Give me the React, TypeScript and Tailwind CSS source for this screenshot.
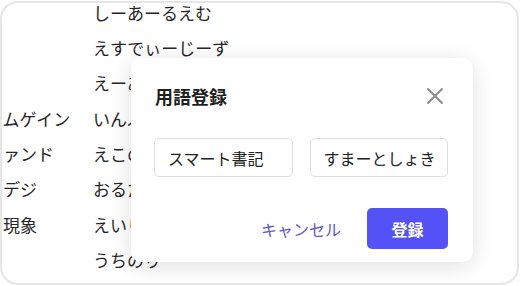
const rows: [string, string][] = [
  ['', 'しーあーるえむ'],
  ['', 'えすでぃーじーず'],
  ['', 'えーあい'],
  ['ラムゲイン', 'いんふれ'],
  ['ファンド', 'えこのみー'],
  ['アデジ', 'おるたなてぃぶ'],
  ['的現象', 'えいりあん'],
  ['', 'うちのり'],
]

function TermDialog() {
  return (
    <div className="absolute left-[129px] top-[55px] w-[342px] h-[204px] bg-white rounded-[10px] shadow-[0_4px_22px_rgba(0,0,0,0.13)] px-6 pt-6 pb-[13px] flex flex-col">
      <div className="flex items-center justify-between">
        <h2 className="text-[18px] leading-7 font-bold text-[#1f1f1f]">用語登録</h2>
        <button aria-label="閉じる" className="mr-[5px] text-[#8c8c8c]">
          <svg width="18" height="18" viewBox="0 0 18 18" fill="none">
            <path d="M2 2L16 16M16 2L2 16" stroke="currentColor" strokeWidth="2" strokeLinecap="round" />
          </svg>
        </button>
      </div>

      <div className="mt-7 flex gap-[17px] pr-[1px] -ml-[1px]">
        <div className="flex-1 h-[39px] border border-[#dedede] rounded-[5px] flex items-center pl-[13px] text-base text-[#222]">
          スマート書記
        </div>
        <div className="flex-1 h-[39px] border border-[#dedede] rounded-[5px] flex items-center pl-[13px] text-base text-[#222]">
          すまーとしょき
        </div>
      </div>

      <div className="mt-auto flex items-center justify-end gap-[26px] pr-[1px]">
        <button className="text-base text-[#5e56d4]">キャンセル</button>
        <button className="w-[81px] h-[41px] rounded-[5px] bg-[#5451f6] text-white text-base font-semibold">
          登録
        </button>
      </div>
    </div>
  )
}

export default function App() {
  return (
    <div
      className="w-[520px] h-[286px] bg-white pt-[1px]"
      style={{ fontFamily: '"Noto Sans CJK JP", "Noto Sans", sans-serif' }}
    >
      <div className="relative w-[519px] h-[284px] border-2 border-[#e6e6e6] rounded-[18px] overflow-hidden">
        <div className="-mt-[8px] -ml-[16px] grid grid-cols-[107px_1fr] auto-rows-[35.3px] text-[17px] text-[#252525]">
          {rows.map(([a, b], i) => (
            <div key={i} className="contents">
              <div className="flex items-center whitespace-nowrap">{a}</div>
              <div className="flex items-center whitespace-nowrap">{b}</div>
            </div>
          ))}
        </div>
        <TermDialog />
      </div>
    </div>
  )
}
